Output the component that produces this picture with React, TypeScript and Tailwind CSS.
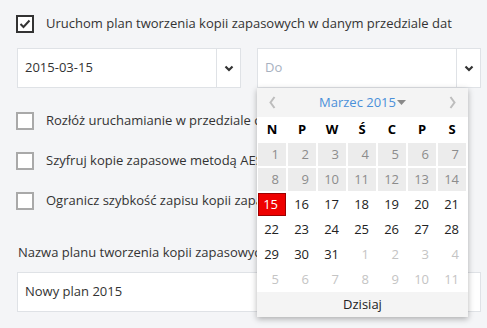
const weeks: { d: number; kind: "off" | "on" | "next" | "sel" }[][] = [
  [1, 2, 3, 4, 5, 6, 7].map((d) => ({ d, kind: "off" as const })),
  [8, 9, 10, 11, 12, 13, 14].map((d) => ({ d, kind: "off" as const })),
  [15, 16, 17, 18, 19, 20, 21].map((d) => ({ d, kind: d === 15 ? ("sel" as const) : ("on" as const) })),
  [22, 23, 24, 25, 26, 27, 28].map((d) => ({ d, kind: "on" as const })),
  [
    { d: 29, kind: "on" as const },
    { d: 30, kind: "on" as const },
    { d: 31, kind: "on" as const },
    { d: 1, kind: "next" as const },
    { d: 2, kind: "next" as const },
    { d: 3, kind: "next" as const },
    { d: 4, kind: "next" as const },
  ],
  [5, 6, 7, 8, 9, 10, 11].map((d) => ({ d, kind: "next" as const })),
];

const dayNames = ["N", "P", "W", "Ś", "C", "P", "S"];

function Chevron() {
  return (
    <svg width="10" height="7" viewBox="0 0 10 7" className="text-[#333]">
      <polyline points="1.5,1.5 5,5 8.5,1.5" fill="none" stroke="currentColor" strokeWidth="2.2" />
    </svg>
  );
}

function DateInput({ value, placeholder }: { value?: string; placeholder?: string }) {
  return (
    <div className="flex h-10 w-[224px] border border-[#dfe2e6] bg-white">
      <div className={`flex flex-1 items-center pl-[7px] ${value ? "text-[#333]" : "text-[#a7b1bf]"}`}>
        {value ?? placeholder}
      </div>
      <div className="flex w-[24px] items-center justify-center border-l border-[#dfe2e6]">
        <Chevron />
      </div>
    </div>
  );
}

function Box({ checked }: { checked?: boolean }) {
  return checked ? (
    <div className="flex h-[18px] w-[18px] items-center justify-center border-2 border-[#333] bg-white">
      <svg width="12" height="10" viewBox="0 0 12 10">
        <polyline points="1.5,5 4.5,8 10.5,1.5" fill="none" stroke="#333" strokeWidth="2" />
      </svg>
    </div>
  ) : (
    <div className="h-[18px] w-[18px] border-2 border-[#a9a9a9] bg-white" />
  );
}

function Calendar() {
  return (
    <div className="absolute left-[257px] top-[88px] w-[211px] bg-white shadow-[0_2px_6px_rgba(0,0,0,0.3)]">
      <div className="flex h-[29px] items-center justify-between bg-[#f4f4f4] px-[12px]">
        <svg width="7" height="13" viewBox="0 0 7 13">
          <polyline points="5.5,1 1.5,6.5 5.5,12" fill="none" stroke="#bdbdbd" strokeWidth="2" />
        </svg>
        <div className="flex items-center text-[#4a90d9]">
          Marzec 2015
          <svg width="9" height="6" viewBox="0 0 9 6" className="ml-px">
            <polygon points="0,0 9,0 4.5,5" fill="#8a8a8a" />
          </svg>
        </div>
        <svg width="7" height="13" viewBox="0 0 7 13">
          <polyline points="1.5,1 5.5,6.5 1.5,12" fill="none" stroke="#bdbdbd" strokeWidth="2" />
        </svg>
      </div>
      <div className="grid h-[25px] grid-cols-[repeat(7,30px)] items-center font-bold text-black">
        {dayNames.map((n, i) => (
          <div key={i} className="text-center">
            {n}
          </div>
        ))}
      </div>
      {weeks.map((w, r) => (
        <div key={r} className="grid grid-cols-[repeat(7,30px)]">
          {w.map((c, i) => (
            <div
              key={i}
              className={
                "m-px flex h-[23px] items-center justify-end pr-[7px] " +
                (c.kind === "off"
                  ? "bg-[#ececec] text-[#8c8c8c]"
                  : c.kind === "sel"
                    ? "border border-[#9b0000] bg-[#ee0000] text-white"
                    : c.kind === "next"
                      ? "text-[#c4c4c4]"
                      : "text-[#222]")
              }
            >
              {c.d}
            </div>
          ))}
        </div>
      ))}
      <div className="flex h-[25px] items-center justify-center bg-[#f4f4f4] text-[#222]">Dzisiaj</div>
    </div>
  );
}

export default function App() {
  return (
    <div className="relative h-[328px] w-[487px] overflow-hidden bg-[#f4f5f7] pl-4 pt-[15px] text-[13px] text-[#333] [font-family:'Open_Sans',sans-serif]">
      <div className="flex h-[18px] items-center gap-3">
        <Box checked />
        <span>Uruchom plan tworzenia kopii zapasowych w danym przedziale dat</span>
      </div>
      <div className="ml-px mt-[15px] flex gap-4">
        <DateInput value="2015-03-15" />
        <DateInput placeholder="Do" />
      </div>
      <div className="mt-6 flex flex-col gap-[22px]">
        <div className="flex h-[18px] items-center gap-3">
          <Box />
          <span>Rozłóż uruchamianie w przedziale czasowym</span>
        </div>
        <div className="flex h-[18px] items-center gap-3">
          <Box />
          <span>Szyfruj kopie zapasowe metodą AES</span>
        </div>
        <div className="flex h-[18px] items-center gap-3">
          <Box />
          <span>Ogranicz szybkość zapisu kopii zapasowych</span>
        </div>
      </div>
      <div className="ml-[2px] mt-[33px] leading-[18px]">Nazwa planu tworzenia kopii zapasowych</div>
      <div className="ml-px mt-[11px] flex h-10 w-[464px] items-center border border-[#dfe2e6] bg-white pl-[7px]">
        Nowy plan 2015
      </div>
      <Calendar />
    </div>
  );
}
